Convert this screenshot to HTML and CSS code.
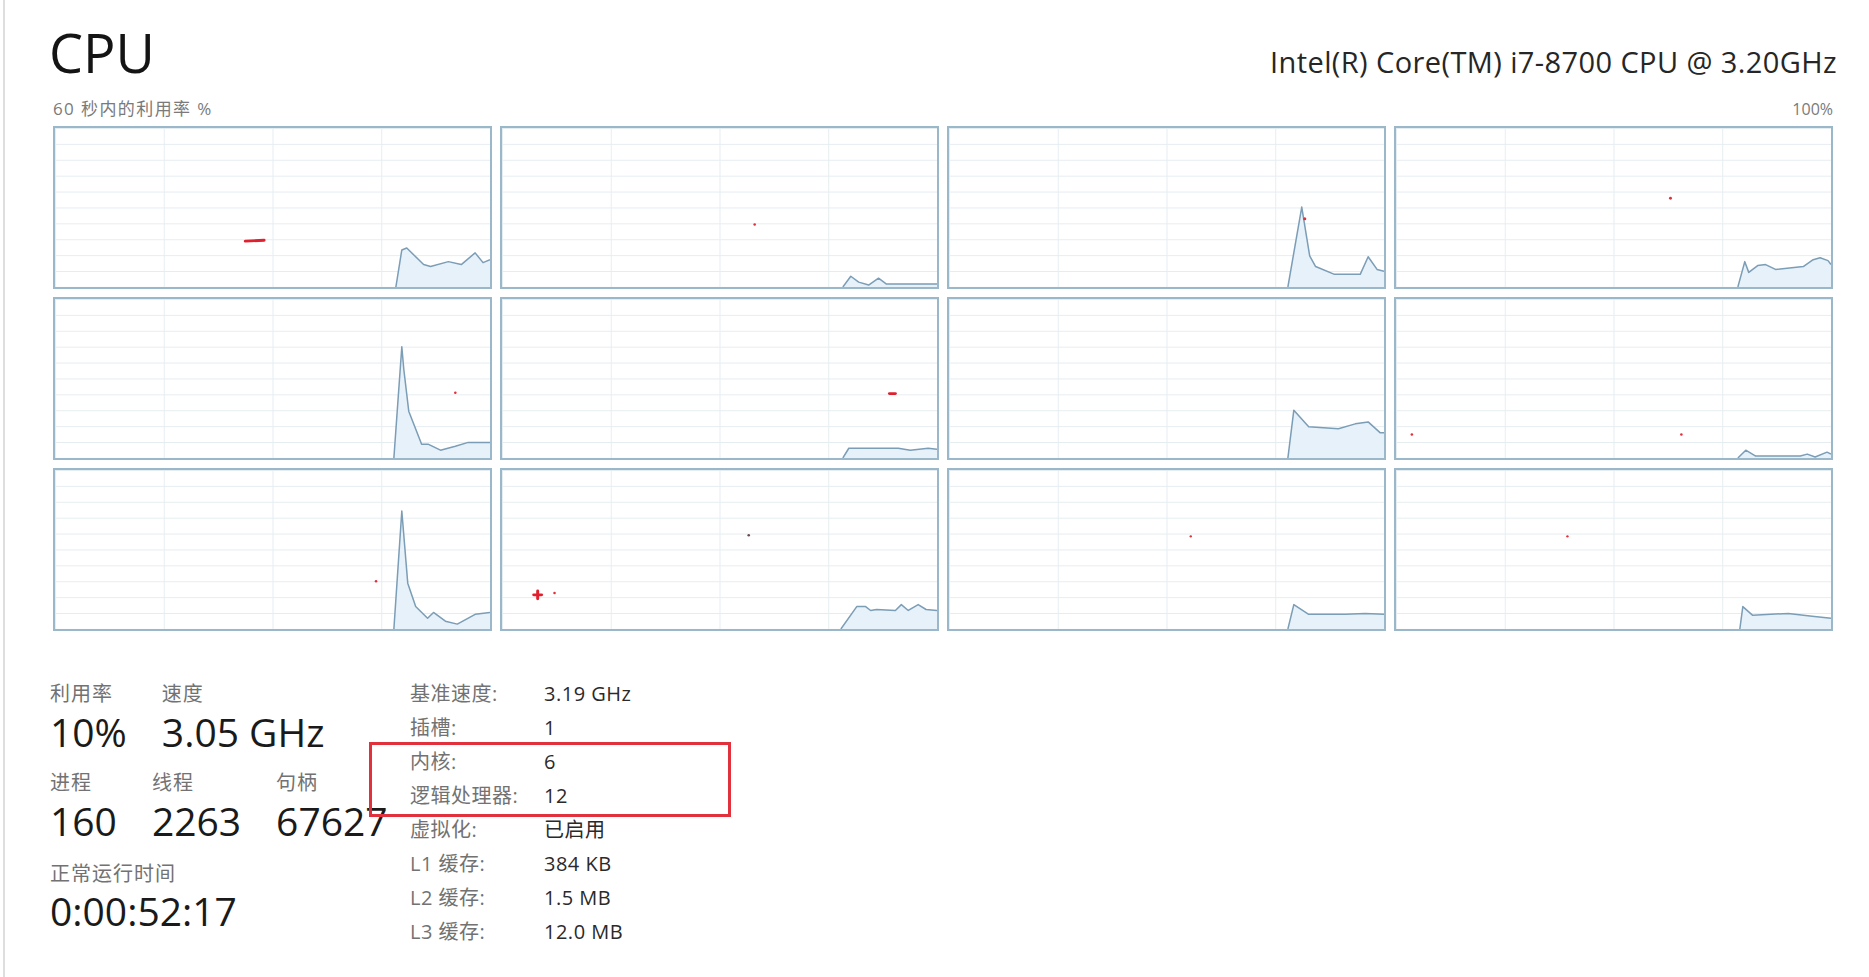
FILE: index.html
```html
<!DOCTYPE html>
<html lang="zh-CN">
<head>
<meta charset="utf-8">
<title>CPU</title>
<link rel="stylesheet" href="styles.css">
</head>
<body>
<div class="page">
  <div class="content">
    <header class="head">
      <h1 class="title">CPU</h1>
      <div class="model">Intel(R) Core(TM) i7-8700 CPU @ 3.20GHz</div>
    </header>
    <div class="axis"><span>60 秒内的利用率 %</span><span class="max">100%</span></div>

    <div class="graphs">
      <div class="graph"><svg viewBox="0 0 439 163" preserveAspectRatio="none">
        <polygon class="area" points="344,163 350,125 355,123 372,140 379,142 397,137 410,140 424,128 432,138 439,135 439,163"/>
        <polyline class="line" points="344,163 350,125 355,123 372,140 379,142 397,137 410,140 424,128 432,138 439,135"/>
        <line class="mark" x1="192" y1="116" x2="211" y2="115"/>
      </svg></div>
      <div class="graph"><svg viewBox="0 0 439 163" preserveAspectRatio="none">
        <polygon class="area" points="344,163 352,152 360,158 370,161 380,154 388,160 439,160 439,163"/>
        <polyline class="line" points="344,163 352,152 360,158 370,161 380,154 388,160 439,160"/>
        <circle class="dot" cx="255" cy="99" r="1.3"/>
      </svg></div>
      <div class="graph"><svg viewBox="0 0 439 163" preserveAspectRatio="none">
        <polygon class="area" points="342,163 356,81 364,131 370,142 389,150 415,150 423,132 432,145 439,147 439,163"/>
        <polyline class="line" points="342,163 356,81 364,131 370,142 389,150 415,150 423,132 432,145 439,147"/>
        <circle class="dot" cx="359" cy="93" r="1.6"/>
      </svg></div>
      <div class="graph"><svg viewBox="0 0 439 163" preserveAspectRatio="none">
        <polygon class="area" points="345,163 352,137 356,148 365,141 373,140 383,145 411,142 421,135 428,133 436,136 439,140 439,163"/>
        <polyline class="line" points="345,163 352,137 356,148 365,141 373,140 383,145 411,142 421,135 428,133 436,136 439,140"/>
        <circle class="dot" cx="277" cy="72" r="1.5"/>
      </svg></div>

      <div class="graph"><svg viewBox="0 0 439 163" preserveAspectRatio="none">
        <polygon class="area" points="342,163 350,49 352,72 357,115 370,149 377,149 389,155 404,151 417,147 439,147 439,163"/>
        <polyline class="line" points="342,163 350,49 352,72 357,115 370,149 377,149 389,155 404,151 417,147 439,147"/>
        <circle class="dot" cx="404" cy="96" r="1.3"/>
      </svg></div>
      <div class="graph"><svg viewBox="0 0 439 163" preserveAspectRatio="none">
        <polygon class="area" points="344,163 350,153 400,153 412,155 430,153 439,154 439,163"/>
        <polyline class="line" points="344,163 350,153 400,153 412,155 430,153 439,154"/>
        <line class="mark" x1="391" y1="97" x2="397" y2="97"/>
      </svg></div>
      <div class="graph"><svg viewBox="0 0 439 163" preserveAspectRatio="none">
        <polygon class="area" points="342,163 348,114 363,131 393,133 410,128 423,126 435,137 439,137 439,163"/>
        <polyline class="line" points="342,163 348,114 363,131 393,133 410,128 423,126 435,137 439,137"/>
      </svg></div>
      <div class="graph"><svg viewBox="0 0 439 163" preserveAspectRatio="none">
        <polygon class="area" points="345,163 353,155 363,161 408,161 415,159 423,162 435,157 439,159 439,163"/>
        <polyline class="line" points="345,163 353,155 363,161 408,161 415,159 423,162 435,157 439,159"/>
        <circle class="dot" cx="16" cy="139" r="1.3"/>
        <circle class="dot" cx="288" cy="139" r="1.3"/>
      </svg></div>

      <div class="graph"><svg viewBox="0 0 439 163" preserveAspectRatio="none">
        <polygon class="area" points="342,163 350,42 356,116 364,140 376,152 382,146 394,155 406,158 424,148 439,146 439,163"/>
        <polyline class="line" points="342,163 350,42 356,116 364,140 376,152 382,146 394,155 406,158 424,148 439,146"/>
        <circle class="dot" cx="324" cy="114" r="1.3"/>
      </svg></div>
      <div class="graph"><svg viewBox="0 0 439 163" preserveAspectRatio="none">
        <polygon class="area" points="342,163 358,140 367,140 372,144 378,143 397,144 403,138 410,144 420,138 428,143 439,144 439,163"/>
        <polyline class="line" points="342,163 358,140 367,140 372,144 378,143 397,144 403,138 410,144 420,138 428,143 439,144"/>
        <line class="mark" x1="32" y1="128" x2="40" y2="128"/>
        <line class="mark" x1="36" y1="124" x2="36" y2="132"/>
        <circle class="dot" cx="53" cy="126" r="1.3"/>
        <circle class="dot dark" cx="249" cy="67" r="1.3"/>
      </svg></div>
      <div class="graph"><svg viewBox="0 0 439 163" preserveAspectRatio="none">
        <polygon class="area" points="342,163 348,138 363,148 400,148 420,147 439,148 439,163"/>
        <polyline class="line" points="342,163 348,138 363,148 400,148 420,147 439,148"/>
        <circle class="dot" cx="244" cy="68" r="1.2"/>
      </svg></div>
      <div class="graph"><svg viewBox="0 0 439 163" preserveAspectRatio="none">
        <polygon class="area" points="347,163 350,140 360,149 396,147 420,150 439,152 439,163"/>
        <polyline class="line" points="347,163 350,140 360,149 396,147 420,150 439,152"/>
        <circle class="dot" cx="173" cy="68" r="1.2"/>
      </svg></div>
    </div>

    <div class="stats">
      <div class="dyn">
        <div class="row r1">
          <div class="stat"><div class="lbl">利用率</div><div class="val">10%</div></div>
          <div class="stat"><div class="lbl">速度</div><div class="val">3.05 GHz</div></div>
        </div>
        <div class="row r2">
          <div class="stat"><div class="lbl">进程</div><div class="val">160</div></div>
          <div class="stat"><div class="lbl">线程</div><div class="val">2263</div></div>
          <div class="stat"><div class="lbl">句柄</div><div class="val">67627</div></div>
        </div>
        <div class="row r3">
          <div class="stat"><div class="lbl">正常运行时间</div><div class="val">0:00:52:17</div></div>
        </div>
      </div>
      <div class="spec">
        <div class="kv"><span class="k">基准速度:</span><span class="v">3.19 GHz</span></div>
        <div class="kv"><span class="k">插槽:</span><span class="v">1</span></div>
        <div class="hl">
          <div class="kv"><span class="k">内核:</span><span class="v">6</span></div>
          <div class="kv"><span class="k">逻辑处理器:</span><span class="v">12</span></div>
        </div>
        <div class="kv"><span class="k">虚拟化:</span><span class="v">已启用</span></div>
        <div class="kv"><span class="k">L1 缓存:</span><span class="v">384 KB</span></div>
        <div class="kv"><span class="k">L2 缓存:</span><span class="v">1.5 MB</span></div>
        <div class="kv"><span class="k">L3 缓存:</span><span class="v">12.0 MB</span></div>
      </div>
    </div>
  </div>
</div>
</body>
</html>
```
FILE: styles.css
```css
html, body {
  margin: 0;
  padding: 0;
  background: #ffffff;
}

body {
  font-family: "Open Sans", "Noto Sans CJK SC", sans-serif;
  color: #1c1c1c;
}

.page {
  margin-left: 3px;
  border-left: 2px solid #dedede;
  min-height: 977px;
  box-sizing: border-box;
}

.content {
  width: 1780px;
  padding-left: 48px;
  padding-top: 23px;
}

.head {
  display: flex;
  justify-content: space-between;
  align-items: baseline;
}

.title {
  margin: 0 0 0 -4px;
  font-size: 54px;
  line-height: 58px;
  font-weight: 400;
  color: #141414;
}

.model {
  font-size: 29px;
  line-height: 34px;
  letter-spacing: 0.4px;
  color: #262626;
  margin-right: -4px;
}

.axis {
  display: flex;
  justify-content: space-between;
  margin-top: 18px;
  margin-bottom: 7px;
  font-size: 17px;
  line-height: 20px;
  letter-spacing: 1.4px;
  color: #7a7a7a;
}

.axis .max {
  letter-spacing: 0;
  font-size: 16px;
}

.graphs {
  display: grid;
  grid-template-columns: repeat(4, 1fr);
  grid-auto-rows: 163px;
  gap: 8px;
}

.graph {
  box-sizing: border-box;
  border: 2px solid #9bb8ca;
  background:
    linear-gradient(to right, #e6edf1 1px, transparent 1px) 0 0 / 25% 100%,
    linear-gradient(to bottom, #e6edf1 1px, transparent 1px) 0 0 / 100% 10%,
    #ffffff;
}

.graph svg {
  display: block;
  width: 100%;
  height: 100%;
}

.area {
  fill: #e6f1f9;
  stroke: none;
}

.line {
  fill: none;
  stroke: #7b9db6;
  stroke-width: 1.5;
  stroke-linejoin: round;
  vector-effect: non-scaling-stroke;
}

.dot {
  fill: #e0303c;
}

.dot.dark {
  fill: #6a4a50;
}

.mark {
  stroke: #e0202e;
  stroke-width: 3;
  stroke-linecap: round;
}

.stats {
  display: flex;
  margin-top: 44px;
  margin-left: -3px;
}

.dyn {
  width: 360px;
  flex: 0 0 auto;
  padding-top: 7px;
}

.row {
  display: flex;
  gap: 35px;
}

.r2 {
  margin-top: 15px;
}

.r3 {
  margin-top: 17px;
}

.lbl {
  font-size: 20px;
  line-height: 24px;
  letter-spacing: 1px;
  color: #727272;
}

.val {
  margin-top: 2px;
  font-size: 39px;
  line-height: 48px;
  color: #1a1a1a;
}

.r3 .val {
  margin-top: 1px;
}

.spec {
  display: flex;
  flex-direction: column;
  padding-top: 2px;
}

.kv {
  display: grid;
  grid-template-columns: 134px auto;
  font-size: 20px;
  line-height: 34px;
  letter-spacing: 0.5px;
}

.k {
  color: #727272;
}

.v {
  color: #2a2a2a;
}

.hl {
  position: relative;
}

.hl::after {
  content: "";
  position: absolute;
  left: -41px;
  width: 362px;
  top: -3px;
  bottom: -4px;
  box-sizing: border-box;
  border: 3px solid #e0313c;
  pointer-events: none;
}
```
